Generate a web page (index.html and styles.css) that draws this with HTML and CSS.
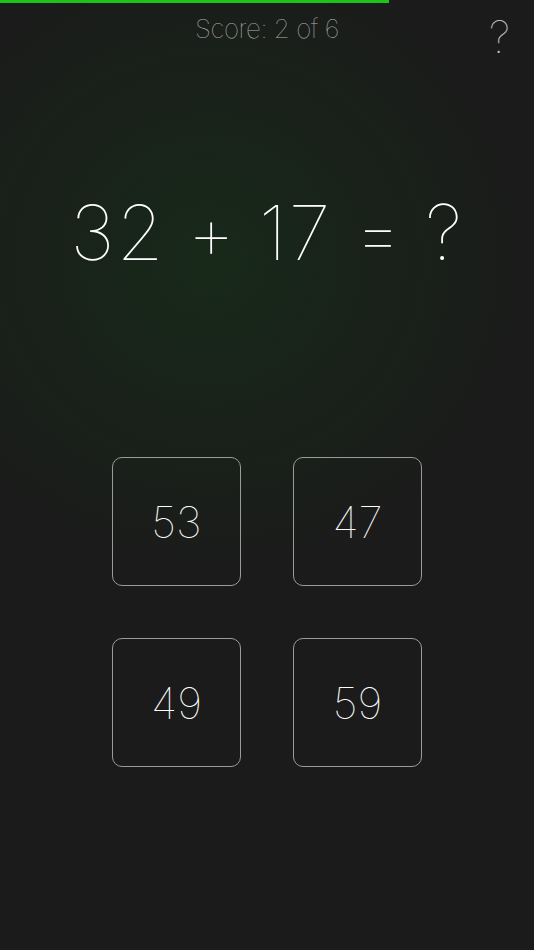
FILE: index.html
```html
<!DOCTYPE html>
<html lang="en">
<head>
    <meta charset="UTF-8">
    <meta name="viewport" content="width=device-width, initial-scale=1.0">
    <title>Quick Math</title>
    <link rel="stylesheet" href="styles.css">
</head>
<body>
    <div class="progress">
        <div class="progress-fill" style="width: 389px;"></div>
    </div>

    <header class="top-bar">
        <span></span>
        <div class="score">Score: 2 of 6</div>
        <button type="button" class="help-btn">?</button>
    </header>

    <!-- Current question -->
    <div class="question">32 + 17 = ?</div>

    <!-- Answer choices -->
    <div class="answers">
        <button type="button" class="answer">53</button>
        <button type="button" class="answer">47</button>
        <button type="button" class="answer">49</button>
        <button type="button" class="answer">59</button>
    </div>
</body>
</html>
```

FILE: styles.css
```css
body {
    font-family: Inter, "Liberation Sans", sans-serif;
    font-weight: 100;
    margin: 0;
    padding: 0;
    height: 950px;
    overflow: hidden;
    background-color: #1b1b1b;
    background-image: radial-gradient(ellipse 330px 320px at 210px 260px, rgba(22, 44, 24, 0.8), rgba(27, 27, 27, 0));
    color: #ffffff;
}

.progress {
    height: 3px;
}

.progress-fill {
    height: 3px;
    background-color: #1ec21a;
}

.top-bar {
    display: grid;
    grid-template-columns: 1fr auto 1fr;
    align-items: start;
    height: 52px;
}

.score {
    font-size: 26px;
    color: #b0b0b0;
    padding-top: 10px;
    letter-spacing: -0.5px;
}

.help-btn {
    justify-self: end;
    background: none;
    border: none;
    color: #bdbdbd;
    font-family: inherit;
    font-weight: 100;
    font-size: 44px;
    line-height: 1;
    padding: 12px 24px 0 0;
    cursor: pointer;
}

.question {
    text-align: center;
    font-size: 76px;
    line-height: 1;
    margin-top: 139px;
    letter-spacing: 2px;
    word-spacing: -2px;
}

.answers {
    display: grid;
    grid-template-columns: 129px 129px;
    gap: 52px;
    justify-content: center;
    margin-top: 187px;
}

.answer {
    width: 129px;
    height: 129px;
    background: transparent;
    border: 1px solid #9a9a9a;
    border-radius: 10px;
    color: #ffffff;
    font-family: inherit;
    font-weight: 100;
    font-size: 44px;
    cursor: pointer;
}
```
